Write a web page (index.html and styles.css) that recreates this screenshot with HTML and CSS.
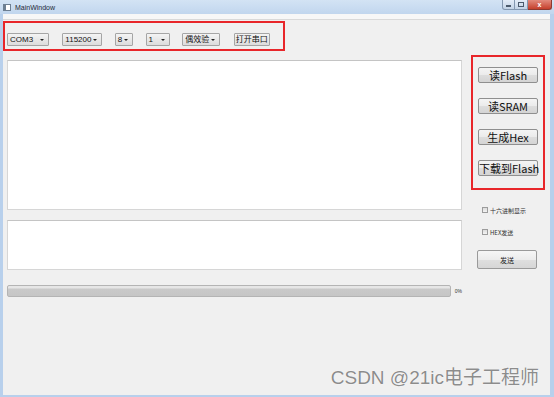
FILE: index.html
```html
<!DOCTYPE html>
<html lang="zh">
<head>
    <meta charset="UTF-8">
    <title>MainWindow</title>
    <link rel="stylesheet" href="styles.css">
</head>
<body>
    <div class="window">
        <div class="titlebar">
            <div class="app-icon"></div>
            <span class="title">MainWindow</span>
            <div class="win-controls">
                <span class="wc wc-min"><i></i></span>
                <span class="wc wc-max"><i></i></span>
                <span class="wc wc-close">x</span>
            </div>
        </div>
        <div class="client">
            <div class="menubar"></div>

            <!-- 串口设置 -->
            <div class="toolbar">
                <div class="combo c-com">COM3<span class="arrow"></span></div>
                <div class="combo c-baud">115200<span class="arrow"></span></div>
                <div class="combo c-data">8<span class="arrow"></span></div>
                <div class="combo c-stop">1<span class="arrow"></span></div>
                <div class="combo c-parity">偶效验<span class="arrow"></span></div>
                <div class="combo c-open">打开串口</div>
            </div>

            <div class="main">
                <div class="left-col">
                    <div class="textbox recv"></div>
                    <div class="textbox send"></div>
                    <div class="progress-row">
                        <div class="progress"></div>
                        <span class="pct">0%</span>
                    </div>
                </div>
                <div class="right-col">
                    <div class="flash-panel">
                        <button class="btn">读Flash</button>
                        <button class="btn">读SRAM</button>
                        <button class="btn">生成Hex</button>
                        <button class="btn">下载到Flash</button>
                    </div>
                    <label class="check first"><span class="box"></span>十六进制显示</label>
                    <label class="check"><span class="box"></span>HEX发送</label>
                    <button class="send-btn">发送</button>
                </div>
            </div>

            <div class="watermark">CSDN @21ic电子工程师</div>
        </div>
    </div>
</body>
</html>
```

FILE: styles.css
```css
body {
    margin: 0;
    background: #ffffff;
    font-family: "Liberation Sans", "Noto Sans CJK SC", sans-serif;
}

.window {
    width: 554px;
    height: 397px;
    display: flex;
    flex-direction: column;
    background: #b8d0ec;
    overflow: hidden;
}

/* barra de titulo */
.titlebar {
    height: 14px;
    display: flex;
    align-items: flex-start;
    background: linear-gradient(#d3e3f4, #c1d6ee);
}

.app-icon {
    width: 6px;
    height: 5px;
    margin: 4px 0 0 3px;
    border: 1px solid #6d7f92;
    background: linear-gradient(90deg, #6d7f92 2px, #ffffff 2px);
}

.title {
    font-size: 7px;
    color: #1e2a38;
    margin: 4px 0 0 4px;
    line-height: 8px;
}

.win-controls {
    margin-left: auto;
    margin-right: 2px;
    display: flex;
}

.wc {
    height: 10px;
    box-sizing: border-box;
    border: 1px solid #8498b0;
    border-top: none;
    background: linear-gradient(#e3ecf7, #c3d3e6);
    display: flex;
    align-items: center;
    justify-content: center;
}

.wc-min {
    width: 13px;
    border-radius: 0 0 0 3px;
}

.wc-min i {
    width: 5px;
    height: 2px;
    background: #4b5a6c;
    margin-top: 3px;
}

.wc-max {
    width: 13px;
    border-left: none;
}

.wc-max i {
    width: 4px;
    height: 3px;
    border: 1px solid #4b5a6c;
}

.wc-close {
    width: 24px;
    border-left: none;
    border-color: #8c3a30;
    border-radius: 0 0 3px 0;
    background: linear-gradient(#e28a7c, #c5402c);
    color: #ffffff;
    font-size: 7px;
    font-weight: bold;
    line-height: 9px;
}

.client {
    flex: 1;
    margin: 0 4px 2px 3px;
    background: #f0f0f0;
    position: relative;
}

.menubar {
    height: 5px;
    background: #f7f7f7;
    border-bottom: 1px solid #d9d9d9;
}

.toolbar {
    width: 282px;
    height: 30px;
    box-sizing: border-box;
    margin-top: 1px;
    border: 2px solid #e8262a;
    padding: 10px 0 0 2px;
    display: flex;
    align-items: flex-start;
}

.combo {
    height: 13px;
    box-sizing: border-box;
    border: 1px solid #a5a5a5;
    border-radius: 1px;
    background: linear-gradient(#f4f4f4, #dcdcdc);
    font-family: "Liberation Sans", "Noto Sans CJK SC", sans-serif;
    font-size: 8px;
    line-height: 11px;
    color: #111111;
    padding-left: 2px;
    position: relative;
    margin-right: 13px;
    white-space: nowrap;
}

.arrow {
    position: absolute;
    right: 4px;
    top: 5px;
    border-left: 2px solid transparent;
    border-right: 2px solid transparent;
    border-top: 2px solid #222222;
}

.c-com { width: 43px; }
.c-baud { width: 40px; }
.c-data { width: 18px; }
.c-stop { width: 25px; margin-right: 12px; }
.c-parity { width: 38px; margin-right: 14px; }
.c-open { width: 37px; text-align: center; padding: 0; }

.main {
    display: grid;
    grid-template-columns: 455px 74px;
    column-gap: 9px;
    padding-left: 4px;
    margin-top: 4px;
}

.left-col {
    padding-top: 5px;
    display: flex;
    flex-direction: column;
}

.textbox {
    background: #ffffff;
    border: 1px solid #d6d6d6;
    border-top-color: #c4c4c4;
    box-sizing: border-box;
}

.recv {
    height: 150px;
}

.send {
    height: 50px;
    margin-top: 10px;
}

.progress-row {
    margin-top: 15px;
    display: flex;
    align-items: center;
}

.progress {
    width: 451px;
    height: 12px;
    box-sizing: border-box;
    border: 1px solid #b4b4b4;
    border-radius: 2px;
    background: linear-gradient(#e6e6e6 0, #e6e6e6 2px, #c9c9c9 3px, #c6c6c6);
}

.pct {
    font-size: 5px;
    margin-left: 4px;
    color: #333333;
}

.flash-panel {
    height: 135px;
    box-sizing: border-box;
    border: 2px solid #e8262a;
    padding: 10px 0 0 5px;
    display: flex;
    flex-direction: column;
    gap: 15px;
}

.btn {
    width: 60px;
    height: 16px;
    padding: 0;
    font-family: "Noto Sans CJK SC", sans-serif;
    font-size: 11px;
    line-height: 14px;
    color: #111111;
    border: 1px solid #8f8f8f;
    border-radius: 2px;
    background: linear-gradient(#f4f4f4 0, #ebebeb 50%, #dddddd 51%, #d4d4d4);
    white-space: nowrap;
}

.check {
    display: flex;
    align-items: center;
    height: 10px;
    margin-left: 11px;
    font-family: "Noto Sans CJK SC", sans-serif;
    font-size: 6px;
    color: #333333;
}

.check.first {
    margin-top: 15px;
}

.check + .check {
    margin-top: 12px;
}

.box {
    width: 6px;
    height: 6px;
    box-sizing: border-box;
    border: 1px solid #9c9c9c;
    background: linear-gradient(#dcdcdc, #f4f4f4);
    margin-right: 2px;
}

.send-btn {
    width: 60px;
    height: 19px;
    margin: 13px 0 0 6px;
    padding: 0;
    font-family: "Noto Sans CJK SC", sans-serif;
    font-size: 7px;
    color: #222222;
    border: 1px solid #9a9a9a;
    border-radius: 2px;
    background: linear-gradient(#f6f6f6 0, #ececec 50%, #dfdfdf 51%, #d6d6d6);
}

.watermark {
    position: absolute;
    right: 11px;
    top: 353px;
    font-family: "Liberation Sans", "Noto Sans CJK SC", sans-serif;
    font-size: 19px;
    line-height: 22px;
    color: #8c8c8c;
    text-shadow: 0 0 1px #ffffff, 0 0 1px #ffffff;
    white-space: nowrap;
}
```
